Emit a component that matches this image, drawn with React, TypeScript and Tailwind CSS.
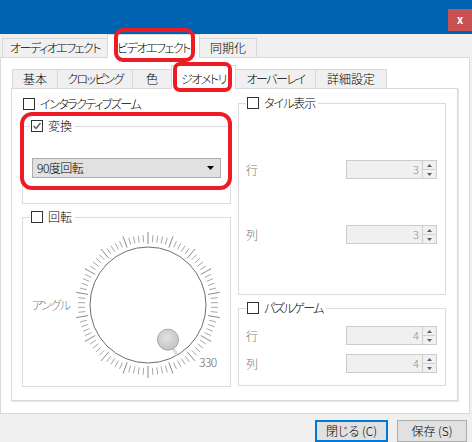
import React from "react";

function Checkbox({ checked = false }: { checked?: boolean }) {
  return (
    <span className="w-[12px] h-[12px] border border-[#333333] bg-white flex items-center justify-center shrink-0">
      {checked && (
        <svg width="10" height="10" viewBox="0 0 10 10">
          <path d="M1.5 5 L4 7.5 L8.5 2" fill="none" stroke="#5a5a5a" strokeWidth="1.3" />
        </svg>
      )}
    </span>
  );
}

function Legend({ checked = false, label, tr = "" }: { checked?: boolean; label: string; tr?: string }) {
  return (
    <legend className="ml-[7px] px-[1px] h-[14px]">
      <div className="flex items-center gap-[5px] h-[14px] pr-[2px]">
        <Checkbox checked={checked} />
        <span className={`leading-[14px] ${tr}`}>{label}</span>
      </div>
    </legend>
  );
}

function Spin({ value }: { value: string }) {
  return (
    <div className="w-[91px] h-[19px] border border-[#cccccc] bg-[#f0f0f0] flex items-center justify-end">
      <span className="text-[#8c8c8c] text-[11px] leading-none mr-[3px]">{value}</span>
      <div className="w-[13px] h-[17px] flex flex-col border-l border-[#d0d0d0] mr-[1px]">
        <div className="flex-1 border-b border-[#d0d0d0] flex items-center justify-center">
          <svg width="5" height="3" viewBox="0 0 5 3">
            <path d="M0 3 L2.5 0 L5 3 Z" fill="#606060" />
          </svg>
        </div>
        <div className="flex-1 flex items-center justify-center">
          <svg width="5" height="3" viewBox="0 0 5 3">
            <path d="M0 0 L2.5 3 L5 0 Z" fill="#606060" />
          </svg>
        </div>
      </div>
    </div>
  );
}

function SpinRow({ label, value, mt }: { label: string; value: string; mt: string }) {
  return (
    <div className={`${mt} h-[19px] flex items-center justify-between pl-[7px] pr-[8px]`}>
      <span className="text-[#7a7a7a] leading-none">{label}</span>
      <Spin value={value} />
    </div>
  );
}

function Dial() {
  const cx = 75;
  const cy = 75;
  const ticks = [];
  for (let i = 0; i < 90; i++) {
    const a = (Math.PI * 3) / 2 - (i * 2 * Math.PI) / 90;
    const big = i % 5 === 0;
    const r1 = big ? 61 : 63;
    const r2 = big ? 73 : 70;
    const c = Math.cos(a);
    const s = Math.sin(a);
    ticks.push(
      <line
        key={i}
        x1={cx + r1 * c}
        y1={cy - r1 * s}
        x2={cx + r2 * c}
        y2={cy - r2 * s}
        stroke={big ? "#8a8a8a" : "#a8a8a8"}
        strokeWidth="1"
      />
    );
  }
  const va = (Math.PI * 3) / 2 - (330 * 2 * Math.PI) / 360;
  const vc = Math.cos(va);
  const vs = Math.sin(va);
  return (
    <svg width="150" height="150" viewBox="0 0 150 150">
      <defs>
        <radialGradient id="knob" cx="0.45" cy="0.4" r="0.6">
          <stop offset="0" stopColor="#e2e2e2" />
          <stop offset="1" stopColor="#c4c4c4" />
        </radialGradient>
      </defs>
      {ticks}
      <circle cx={cx} cy={cy} r="58" fill="#ffffff" stroke="#6e6e6e" strokeWidth="1" />
      <line
        x1={cx + 50 * vc}
        y1={cy - 50 * vs}
        x2={cx + 57.5 * vc}
        y2={cy - 57.5 * vs}
        stroke="#dedede"
        strokeWidth="3"
      />
      <circle cx={cx + 40 * vc} cy={cy - 40 * vs} r="10.5" fill="url(#knob)" stroke="#a6a6a6" strokeWidth="1" />
      <text x="126" y="137" fontSize="12" fill="#666666" fontFamily="'Noto Sans CJK JP', sans-serif" letterSpacing="-0.5">
        330
      </text>
    </svg>
  );
}

export default function App() {
  const tabBase = "flex items-center justify-center border border-b-0 border-[#d9d9d9] whitespace-nowrap";
  const K = "tracking-[-1.5px]";
  return (
    <div className="w-[472px] h-[442px] bg-[#f0f0f0] relative overflow-hidden text-[12px] text-black font-light font-['Noto_Sans_CJK_JP','Noto_Sans',sans-serif] [font-feature-settings:'palt']">
      {/* title bar */}
      <div className="h-[34px] bg-[#0063b1] flex justify-end items-start">
        <div className="mt-[9px] w-[24px] h-[22px] bg-[#c75050] text-white flex items-center justify-center text-[11px] font-bold leading-none pb-[2px]">
          x
        </div>
      </div>

      {/* outer tabs */}
      <div className="h-[23px] flex items-end pl-[2px]">
        <div className={`${tabBase} ${K} w-[106px] h-[19px] bg-[#f0f0f0]`}>オーディオエフェクト</div>
        <div className={`${tabBase} ${K} -ml-px w-[93px] h-[24px] bg-white -mb-px relative z-10 pt-[2px]`}>ビデオエフェクト</div>
        <div className={`${tabBase} -ml-px w-[58px] h-[19px] bg-[#f0f0f0]`}>同期化</div>
      </div>

      {/* outer panel */}
      <div className="w-[470px] h-[357px] bg-white border border-[#d9d9d9] pl-[10px] pt-[7px] flex flex-col">
        {/* inner tabs */}
        <div className="h-[23px] flex items-end pl-[1px]">
          <div className={`${tabBase} w-[46px] h-[19px] bg-[#f0f0f0]`}>基本</div>
          <div className={`${tabBase} ${K} -ml-px w-[76px] h-[19px] bg-[#f0f0f0]`}>クロッピング</div>
          <div className={`${tabBase} -ml-px w-[40px] h-[19px] bg-[#f0f0f0]`}>色</div>
          <div className={`${tabBase} ${K} -ml-px w-[65px] h-[24px] bg-white -mb-px relative z-10 pt-[2px]`}>ジオメトリ</div>
          <div className={`${tabBase} ${K} -ml-px w-[81px] h-[19px] bg-[#f0f0f0]`}>オーバーレイ</div>
          <div className={`${tabBase} -ml-px w-[72px] h-[19px] bg-[#f0f0f0]`}>詳細設定</div>
        </div>

        {/* inner panel */}
        <div className="w-[447px] h-[313px] border border-[#d9d9d9] bg-white flex gap-[7px] pl-[10px] shadow-[1px_1px_0_#e6e6e6]">
          {/* left column */}
          <div className="w-[209px] flex flex-col">
            <div className="mt-[8px] h-[14px] flex items-center gap-[5px] pl-[1px]">
              <Checkbox />
              <span className={`leading-[14px] ${K}`}>インタラクティブズーム</span>
            </div>

            <fieldset className="mt-[8px] h-[85px] w-full border border-[#dcdcdc]">
              <Legend checked label="変換" />
              <div className="mt-[25px] ml-[9px] w-[189px] h-[20px] bg-[#e1e1e1] border border-[#adadad] flex items-center justify-between pl-[4px] pr-[6px]">
                <span className="leading-none tracking-[-0.5px]">90度回転</span>
                <svg width="7" height="4" viewBox="0 0 7 4">
                  <path d="M0 0 L7 0 L3.5 4 Z" fill="#000000" />
                </svg>
              </div>
            </fieldset>

            <fieldset className="mt-[6px] h-[177px] w-full border border-[#dcdcdc]">
              <Legend label="回転" />
              <div className="mt-[6px] flex items-center">
                <div className={`w-[50px] pl-[9px] text-[#7a7a7a] whitespace-nowrap leading-none ${K}`}>アングル</div>
                <Dial />
              </div>
            </fieldset>
          </div>

          {/* right column */}
          <div className="w-[208px] flex flex-col">
            <fieldset className="mt-[7px] h-[199px] w-full border border-[#dcdcdc]">
              <Legend label="タイル表示" tr="tracking-[-1px]" />
              <SpinRow label="行" value="3" mt="mt-[50px]" />
              <SpinRow label="列" value="3" mt="mt-[46px]" />
            </fieldset>

            <fieldset className="mt-[6px] h-[85px] w-full border border-[#dcdcdc]">
              <Legend label="パズルゲーム" tr={K} />
              <SpinRow label="行" value="4" mt="mt-[11px]" />
              <SpinRow label="列" value="4" mt="mt-[9px]" />
            </fieldset>
          </div>
        </div>
      </div>

      {/* bottom buttons */}
      <div className="mt-[6px] flex justify-end gap-[9px] pr-[5px]">
        <button className="w-[73px] h-[22px] bg-[#e1e1e1] border-2 border-[#0078d7] flex items-center justify-center leading-none">
          閉じる (C)
        </button>
        <button className="w-[70px] h-[22px] bg-[#e1e1e1] border border-[#adadad] flex items-center justify-center leading-none">
          保存 (S)
        </button>
      </div>

      {/* red annotations */}
      <div className="absolute left-[114px] top-[28px] w-[81px] h-[34px] border-4 border-[#ed1c24] rounded-[9px] pointer-events-none z-20" />
      <div className="absolute left-[173px] top-[62px] w-[59px] h-[30px] border-4 border-[#ed1c24] rounded-[7px] pointer-events-none z-20" />
      <div className="absolute left-[20px] top-[112px] w-[212px] h-[78px] border-4 border-[#ed1c24] rounded-[12px] pointer-events-none z-20" />
    </div>
  );
}
